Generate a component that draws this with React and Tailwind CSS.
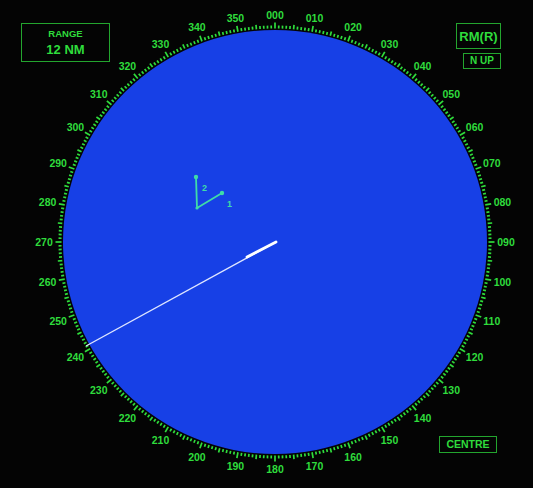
import React from "react";

const CX = 275;
const CY = 242;
const R = 212;
const GREEN = "#2fdc3c";

function polar(r, deg) {
  const a = (deg * Math.PI) / 180;
  return [CX + r * Math.sin(a), CY - r * Math.cos(a)];
}

function Dial() {
  const ticks = [];
  for (let d = 0; d < 360; d++) {
    const len = d % 10 === 0 ? 6 : d % 5 === 0 ? 4.5 : 3;
    const [x1, y1] = polar(R + 1.5, d);
    const [x2, y2] = polar(R + 1.5 + len, d);
    ticks.push(
      <line key={d} x1={x1} y1={y1} x2={x2} y2={y2} stroke={GREEN} strokeWidth="1.7" />
    );
  }

  const labels = [];
  for (let d = 0; d < 360; d += 10) {
    const s = Math.abs(Math.sin((d * Math.PI) / 180));
    const [x, y] = polar(227 + 4 * s, d);
    labels.push(
      <text
        key={d}
        x={x}
        y={y}
        textAnchor="middle"
        dominantBaseline="central"
        fill={GREEN}
        fontSize="10.5"
        fontWeight="bold"
        fontFamily="'Liberation Sans', Arial, sans-serif"
      >
        {String(d).padStart(3, "0")}
      </text>
    );
  }

  return (
    <svg width="533" height="488" viewBox="0 0 533 488" className="block">
      <circle cx={CX} cy={CY} r={R} fill="#1740e6" />
      {ticks}
      {labels}

      {/* own ship heading line */}
      <line x1="276" y1="242" x2="86" y2="346" stroke="#dfe6ff" strokeWidth="1.4" />
      <line x1="276" y1="242" x2="247" y2="257" stroke="#ffffff" strokeWidth="2.8" strokeLinecap="round" />

      {/* vectors */}
      <g stroke="#3fdca8" strokeWidth="1.8" fill="#3fdca8">
        <line x1="197" y1="208" x2="196" y2="177" />
        <line x1="197" y1="208" x2="222" y2="193" />
        <circle cx="196" cy="177" r="2.2" stroke="none" />
        <circle cx="222" cy="193" r="2.2" stroke="none" />
        <circle cx="197" cy="208" r="1.6" stroke="none" />
      </g>
      <text x="202" y="191" fill="#3fdca8" fontSize="9" fontWeight="bold" fontFamily="'Liberation Sans', Arial, sans-serif">
        2
      </text>
      <text x="227" y="207" fill="#3fdca8" fontSize="9" fontWeight="bold" fontFamily="'Liberation Sans', Arial, sans-serif">
        1
      </text>
    </svg>
  );
}

export default function App() {
  return (
    <div className="relative w-[533px] h-[488px] bg-[#040404] overflow-hidden font-['Liberation_Sans',Arial,sans-serif] font-bold text-[#2fdc3c]">
      <Dial />

      <div className="absolute left-[21px] top-[23px] w-[89px] h-[39px] border border-[#23a52e] flex flex-col items-center justify-center gap-[4px]">
        <span className="text-[9.5px] leading-none">RANGE</span>
        <span className="text-[13px] leading-none">12 NM</span>
      </div>

      <div className="absolute right-[32px] top-[23px] flex flex-col items-end gap-[4px]">
        <div className="w-[45px] h-[26px] border border-[#23a52e] flex items-center justify-center text-[13px] leading-none">
          RM(R)
        </div>
        <div className="w-[38px] h-[16px] border border-[#23a52e] flex items-center justify-center text-[10px] leading-none">
          N UP
        </div>
      </div>

      <div className="absolute left-[439px] top-[436px] w-[58px] h-[17px] border border-[#23a52e] flex items-center justify-center text-[10.5px] leading-none">
        CENTRE
      </div>
    </div>
  );
}
